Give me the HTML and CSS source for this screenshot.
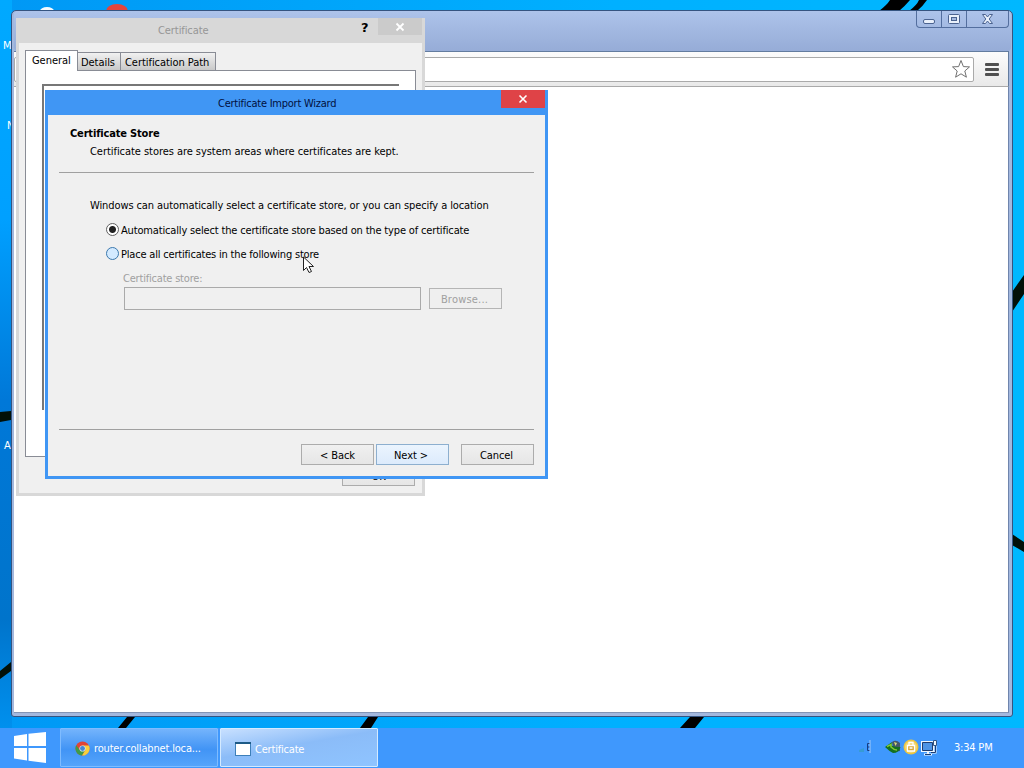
FILE: index.html
```html
<!DOCTYPE html>
<html lang="en">
<head>
<meta charset="utf-8">
<title>Desktop</title>
<link rel="stylesheet" href="styles.css">
</head>
<body>
<div class="desktop">
  <svg class="wallpaper" width="1024" height="728" viewBox="0 0 1024 728">
    <path d="M879 11Q887 5 890 0H910Q905 6 899 11ZM909 11Q917 5 919 0H927Q923 6 917 11Z" fill="#000"/>
    <path d="M0 412L11 411V420L0 422ZM0 671L11 662V671L0 679ZM1012 292L1024 275V294L1012 312ZM1012 534L1024 542V552L1012 545Z" fill="#021008"/>
    <path d="M118 728L127 717H135L126 728ZM360 728L368 717H378L371 728ZM680 728L690 717H704L695 728Z" fill="#000"/>
    <ellipse cx="47" cy="11" rx="7" ry="4" fill="#f5fbff"/>
    <ellipse cx="117" cy="11" rx="11" ry="7" fill="#e2453d"/>
  </svg>
  <span class="shortcut shortcut-m">M</span>
  <span class="shortcut shortcut-n">N</span>
  <span class="shortcut shortcut-a">A</span>

  <section class="browser">
    <header class="browser-title">
      <div class="window-controls">
        <span class="control"><svg width="24" height="16"><rect x="6.500" y="8.500" width="11" height="4" rx="1.500" fill="#e9f0fb" stroke="#4b6390"/></svg></span>
        <span class="control"><svg width="24" height="16"><rect x="6.500" y="3.500" width="11" height="9" rx="1" fill="#e9f0fb" stroke="#4b6390"/><rect x="9.500" y="6.500" width="5" height="3" fill="#a4b8df" stroke="#4b6390"/></svg></span>
        <span class="control control-close"><svg width="41" height="16"><path d="M15.500 3.500h3l2 2.500 2-2.500h3l-3.300 4.500 3.300 4.500h-3l-2-2.500-2 2.500h-3l3.300-4.500z" fill="#e9f0fb" stroke="#4b6390"/></svg></span>
      </div>
    </header>
    <div class="toolbar">
      <div class="omnibox"><svg width="20" height="20" viewBox="0 0 20 20"><path d="M10 1.500L12.400 7.600L18.500 7.900L13.800 12L15.400 18.200L10 14.800L4.600 18.200L6.200 12L1.500 7.900L7.600 7.600Z" fill="#fff" stroke="#707070" stroke-linejoin="round"/></svg></div>
      <div class="menu"><i></i><i></i><i></i></div>
    </div>
    <main class="page"></main>
  </section>

  <section class="dialog">
    <header class="dialog-title">
      <span class="dialog-name">Certificate</span>
      <span class="help">?</span>
      <span class="dialog-close"><svg width="10" height="10"><path d="M1.500 1.500L8.500 8.500M8.500 1.500L1.500 8.500" stroke="#fff" stroke-width="1.800"/></svg></span>
    </header>
    <div class="dialog-body">
      <nav class="tabs"><span class="tab tab-active">General</span><span class="tab t-details">Details</span><span class="tab t-path">Certification Path</span></nav>
      <div class="tab-page"><div class="cert-info"></div></div>
      <div class="dialog-actions"><span class="button">OK</span></div>
    </div>
  </section>

  <section class="wizard">
    <header class="wizard-title">
      <span class="wizard-name">Certificate Import Wizard</span>
      <span class="wizard-close"><svg width="10" height="10"><path d="M1.500 1.500L8.500 8.500M8.500 1.500L1.500 8.500" stroke="#fff" stroke-width="1.600"/></svg></span>
    </header>
    <div class="wizard-body">
      <h1>Certificate Store</h1>
      <p class="subtitle">Certificate stores are system areas where certificates are kept.</p>
      <hr>
      <div class="wizard-content">
        <p class="intro">Windows can automatically select a certificate store, or you can specify a location</p>
        <div class="option"><i class="radio radio-checked"></i><span class="label-auto">Automatically select the certificate store based on the type of certificate</span></div>
        <div class="option"><i class="radio radio-hover"></i><span class="label-place">Place all certificates in the following store</span></div>
        <p class="field-label">Certificate store:</p>
        <div class="field-row"><div class="field"></div><span class="button button-disabled">Browse...</span></div>
      </div>
      <hr>
      <footer class="wizard-actions"><span class="button">&lt; Back</span><span class="button button-next">Next &gt;</span><span class="button button-cancel">Cancel</span></footer>
    </div>
  </section>

  <svg class="cursor" width="13" height="18" viewBox="0 0 13 18"><path d="M1.500 1V14.500L4.500 11.500L7 16.500L9.500 15.500L7 10.500H11.500Z" fill="#fff" stroke="#222"/></svg>

  <footer class="taskbar">
    <div class="start"><svg width="32" height="31" viewBox="0 0 32 31"><path d="M0 4L13 2V14H0ZM14.500 1.800L32 0V14H14.500ZM0 16H13V28.500L0 26.500ZM14.500 16H32V31L14.500 28.800Z" fill="#fff"/></svg></div>
    <div class="task">
      <svg width="15" height="15" viewBox="0 0 16 16"><circle cx="8" cy="8" r="7.500" fill="#e04436"/><path d="M1.400 4.500A7.500 7.500 0 0 0 7.500 15.500L11 9.500 5 9.500Z" fill="#3f9b48"/><path d="M8 4.700H14.800A7.500 7.500 0 0 1 7.500 15.500L11 9.500Z" fill="#f7d03c"/><circle cx="8" cy="8" r="3.300" fill="#dce8f4"/><circle cx="8" cy="8" r="2.600" fill="#4688d2"/></svg>
      <span class="task-router">router.collabnet.loca...</span>
    </div>
    <div class="task task-active">
      <svg width="16" height="14"><rect width="16" height="14" fill="#3d7fb9"/><path d="M0 0H16V2H0Z" fill="#1d5a86"/><rect x="1" y="2" width="14" height="11" fill="#fff"/></svg>
      <span class="task-cert">Certificate</span>
    </div>
    <div class="tray">
      <svg class="tray-edge" width="14" height="16"><path d="M1 11L6 9V13H1Z" fill="#379bd4"/><path d="M12 4.500H9.500V11.500H12M9.500 8H12" stroke="#173c82" fill="none"/><path d="M12 1V14" stroke="#a4c9f8"/></svg>
      <svg width="16" height="16" viewBox="0 0 16 16"><path d="M7 3Q11 0 15 4V12L9 13Z" fill="#44586c"/><path d="M0 8L7 3L6.500 6.500Q11 8.500 15.500 8Q14 14 8 14Q4 12 0 8Z" fill="#137021"/><path d="M2 7.500L6 5.500L6 8Q9 11 12 11" stroke="#82c831" stroke-width="1.600" fill="none"/><path d="M9 3L12 4L10.500 7Z" fill="#dadb77"/></svg>
      <svg width="16" height="16" viewBox="0 0 16 16"><circle cx="8" cy="8" r="7.500" fill="#edc540"/><circle cx="8" cy="8" r="6" fill="#f3d873"/><path d="M4.500 6.500H11.500V12H4.500Z" fill="#d9a735" stroke="#fff" stroke-width="1.300"/><path d="M6 6V3.500H10V6M6.500 9H9.500" stroke="#fff" stroke-width="1.300" fill="none"/></svg>
      <svg width="17" height="17" viewBox="0 0 17 17"><path d="M1.500 3.500H11.500V11.500H1.500Z" fill="#4c94e6" stroke="#eef7ff" stroke-width="3"/><path d="M1.500 3.500H11.500V11.500H1.500Z" fill="#4c94e6" stroke="#1d3c70"/><path d="M7 12V15M3 15.500H11M14.500 6V13.500H11" stroke="#eef7ff" stroke-width="2" fill="none"/><path d="M4 15.500H10M14.500 6V13.500H10" stroke="#1d3c70" fill="none"/><path d="M12.500 1.500H15.500V6.500H12.500Z" fill="#eef7ff" stroke="#315788"/></svg>
      <time>3:34 PM</time>
    </div>
  </footer>
</div>
</body>
</html>
```
FILE: styles.css
```css
* { box-sizing: border-box; }
body { margin: 0; overflow: hidden; font: 11px/14px "DejaVu Sans Condensed", "DejaVu Sans", sans-serif; font-stretch: condensed; color: #000; }
h1, p { margin: 0; font-size: inherit; }
svg { display: block; flex: none; }
span, time { white-space: nowrap; }
.desktop { position: relative; width: 1024px; height: 768px; overflow: hidden; background: linear-gradient(90deg, #0098f5, #00b0ff 60%, #00b8ff); }
.desktop::before { content: ""; position: absolute; left: 0; top: 0; width: 12px; height: 728px; background: linear-gradient(#00a9ff, #00a0ff 30%, #0078d8 55%, #0074cb 85%, #0090ee); }
.wallpaper { position: absolute; left: 0; top: 0; }
.shortcut { position: absolute; color: #fff; }
.shortcut-m { left: 3px; top: 39px; }
.shortcut-n { left: 7px; top: 119px; }
.shortcut-a { left: 4px; top: 439px; }

.browser { position: absolute; left: 11px; top: 10px; width: 1002px; height: 707px; display: flex; flex-direction: column; padding: 0 3px 3px 2px; background: #a3b8de; border: 1px solid #355480; border-radius: 5px 5px 3px 3px; }
.browser-title { height: 40px; flex: none; display: flex; justify-content: flex-end; background: linear-gradient(#adc3ea, #96acd7); margin-right: -2px; border-radius: 4px; }
.window-controls { display: flex; width: 93px; height: 17px; margin-right: 2px; border: 1px solid #536e9e; border-top: 0; border-radius: 0 0 4px 4px; }
.control { width: 25px; border-right: 1px solid #536e9e; }
.control-close { width: 41px; border: 0; }
.toolbar { height: 36px; flex: none; display: flex; align-items: center; background: linear-gradient(#fcfcfc, #e9e9e9); border-top: 1px solid #637c9f; border-bottom: 1px solid #aaa; border-right: 1px solid #637c9f; }
.omnibox { width: 960px; height: 25px; background: #fff; border: 1px solid #aaa; border-radius: 2px; display: flex; align-items: center; justify-content: flex-end; padding-right: 2px; }
.menu { width: 14px; margin-left: 11px; display: grid; gap: 2px; }
.menu i { height: 3px; background: #505050; border-radius: 1px; }
.page { flex: 1; background: #fff; border-right: 1px solid #6f85ad; border-bottom: 1px solid #8294b5; }

.dialog { position: absolute; left: 16px; top: 18px; width: 409px; height: 478px; background: #d8d8d8; padding: 0 3px 3px; }
.dialog-title { height: 25px; display: flex; align-items: flex-start; }
.dialog-name { margin: 6px 0 0 139px; width: 55px; color: #969696; letter-spacing: -.08px; }
.help { margin: 2px 0 0 148px; width: 16px; font: bold 13px/15px "DejaVu Sans", sans-serif; }
.dialog-close { width: 44px; height: 17px; margin-left: auto; background: #cbcbcb; display: grid; place-items: center; }
.dialog-body { height: 450px; background: #f0f0f0; padding: 7px 6px; }
.tabs { height: 20px; display: flex; align-items: flex-end; }
.tab { height: 18px; border: 1px solid #898c95; border-left: 0; border-bottom: 0; background: linear-gradient(#f1f1f1, #c9c9c9); padding: 3px 3px; letter-spacing: -.05px; }
.tab-active { height: 21px; width: 53px; margin-bottom: -1px; padding: 3px 6px; background: #fff; border-left: 1px solid #898c95; position: relative; }
.t-details { width: 43px; }
.t-path { width: 95px; padding-left: 4px; }
.tab-page { width: 391px; height: 387px; border: 1px solid #898c95; background: #fff; padding: 13px 16px; }
.cert-info { width: 357px; height: 326px; border-top: 2px solid #777; border-left: 2px solid #777; }
.dialog-actions { display: flex; justify-content: flex-end; padding: 8px 1px; }
.button { width: 73px; height: 21px; flex: none; border: 1px solid #acacac; background: linear-gradient(#f0f0f0, #e6e6e6); text-align: center; padding-top: 4px; letter-spacing: -.1px; }

.wizard { position: absolute; left: 45px; top: 90px; width: 503px; height: 389px; background: #4096f4; padding: 0 3px 3px; }
.wizard-title { height: 25px; display: flex; align-items: flex-start; color: #001040; }
.wizard-name { margin: 7px 0 0 170px; letter-spacing: -.24px; }
.wizard-close { width: 44px; height: 18px; margin-left: auto; background: #df4347; display: grid; place-items: center; }
.wizard-body { height: 361px; padding: 12px 11px 11px; background: #f0f0f0; display: flex; flex-direction: column; }
h1 { height: 18px; padding-left: 11px; font-weight: bold; letter-spacing: -.17px; }
.subtitle { padding-left: 31px; height: 27px; white-space: nowrap; letter-spacing: -.05px; }
hr { width: 475px; height: 1px; flex: none; margin: 0; border: 0; background: #a0a0a0; }
.wizard-content { height: 256px; padding: 26px 0 0 31px; }
.intro { height: 24px; white-space: nowrap; letter-spacing: -.1px; }
.option { height: 24px; padding-left: 16px; display: flex; align-items: flex-start; gap: 2px; }
.option span { padding-top: 1px; }
.label-auto { letter-spacing: -.16px; }
.label-place { letter-spacing: -.19px; }
.radio { width: 13px; height: 13px; flex: none; border: 1px solid #606060; border-radius: 50%; background: #fff; }
.radio-checked { background: radial-gradient(circle, #222 0 3px, #fff 4px); }
.radio-hover { border-color: #3b78ad; background: #d3eaff; }
.field-label { height: 16px; padding: 1px 0 0 33px; color: #a0a0a0; letter-spacing: -.2px; }
.field-row { display: flex; padding-left: 34px; gap: 8px; }
.field { width: 297px; height: 23px; border: 1px solid #aaa; }
.button-disabled { margin-top: 1px; color: #a0a0a0; border-color: #b5b5b5; background: #efefef; letter-spacing: .2px; padding-right: 2px; }
.wizard-actions { display: flex; justify-content: flex-end; padding-top: 14px; gap: 2px; }
.button-next { border-color: #8dafcf; background: linear-gradient(#ebf4fe, #dcebfc); padding-right: 3px; }
.button-cancel { margin-left: 10px; padding-right: 2px; }
.cursor { position: absolute; left: 302px; top: 256px; }

.taskbar { position: absolute; left: 0; top: 728px; width: 1024px; height: 40px; display: flex; background: #3f98fd; color: #fff; }
.start { width: 60px; padding: 4px 0 0 14px; }
.task { width: 158px; height: 39px; display: flex; align-items: center; gap: 4px; padding: 2px 0 0 14px; border: 1px solid #7fbcff; background: linear-gradient(#74b4fc, #4194f5 55%, #55a4fb); border-radius: 1px; }
.task-router { letter-spacing: -.17px; }
.task-cert { letter-spacing: -.2px; padding-top: 2px; }
.task-active { margin-left: 2px; border-color: #d4eaff; background: linear-gradient(170deg, #c8e0ff, #8bbcf8 45%, #8fc4ff); }
.tray { margin-left: auto; width: 166px; padding: 11px 0 0; display: flex; gap: 2px; }
.tray-edge { margin-right: 11px; }
time { margin: 2px 0 0 14px; letter-spacing: -.2px; }
```
